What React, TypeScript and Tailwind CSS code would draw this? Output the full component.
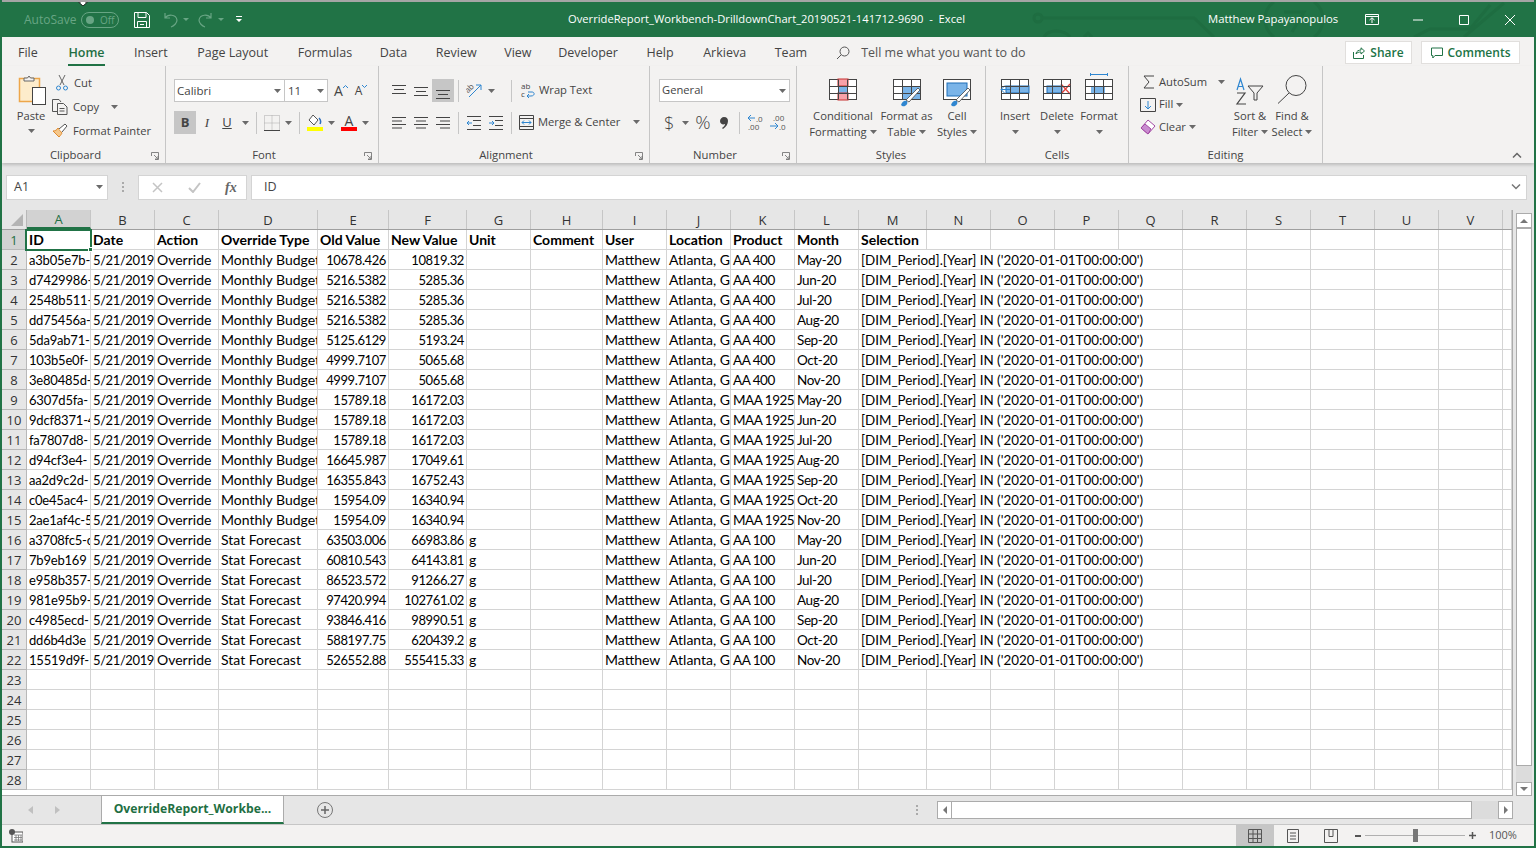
import React from "react";

const cols = [
  { l: "A", w: "w-[64px]" },
  { l: "B", w: "w-[64px]" },
  { l: "C", w: "w-[64px]" },
  { l: "D", w: "w-[99px]" },
  { l: "E", w: "w-[71px]" },
  { l: "F", w: "w-[78px]" },
  { l: "G", w: "w-[64px]" },
  { l: "H", w: "w-[72px]" },
  { l: "I", w: "w-[64px]" },
  { l: "J", w: "w-[64px]" },
  { l: "K", w: "w-[64px]" },
  { l: "L", w: "w-[64px]" },
  { l: "M", w: "w-[68px]" },
  { l: "N", w: "w-[64px]" },
  { l: "O", w: "w-[64px]" },
  { l: "P", w: "w-[64px]" },
  { l: "Q", w: "w-[64px]" },
  { l: "R", w: "w-[64px]" },
  { l: "S", w: "w-[64px]" },
  { l: "T", w: "w-[64px]" },
  { l: "U", w: "w-[64px]" },
  { l: "V", w: "w-[64px]" },
  { l: "", w: "w-[9px]" },
];

// text metrics per column, Lato letters run narrow and its digits run wide next to Calibri
const colText: Record<number, string> = {
  0: "text-[13px] tracking-[-0.2px] pt-[2px]",
  1: "text-[13px] tracking-[-0.4px] pt-[2px]",
  4: "text-[13px] tracking-[-0.4px] pt-[2px]",
  5: "text-[13px] tracking-[-0.4px] pt-[2px]",
  10: "text-[13.5px] tracking-[-0.5px] pt-[1px]",
  11: "text-[13.5px] tracking-[-0.4px] pt-[1px]",
  12: "text-[13.4px] pt-[1px]",
};

const SEL = "[DIM_Period].[Year] IN ('2020-01-01T00:00:00')";
const header = ["ID", "Date", "Action", "Override Type", "Old Value", "New Value", "Unit", "Comment", "User", "Location", "Product", "Month", "Selection"];

const data: string[][] = [
  ["a3b05e7b-", "Monthly Budget", "10678.426", "10819.32", "", "AA 400", "May-20"],
  ["d7429986-", "Monthly Budget", "5216.5382", "5285.36", "", "AA 400", "Jun-20"],
  ["2548b511-", "Monthly Budget", "5216.5382", "5285.36", "", "AA 400", "Jul-20"],
  ["dd75456a-", "Monthly Budget", "5216.5382", "5285.36", "", "AA 400", "Aug-20"],
  ["5da9ab71-", "Monthly Budget", "5125.6129", "5193.24", "", "AA 400", "Sep-20"],
  ["103b5e0f-", "Monthly Budget", "4999.7107", "5065.68", "", "AA 400", "Oct-20"],
  ["3e80485d-", "Monthly Budget", "4999.7107", "5065.68", "", "AA 400", "Nov-20"],
  ["6307d5fa-", "Monthly Budget", "15789.18", "16172.03", "", "MAA 1925", "May-20"],
  ["9dcf8371-4", "Monthly Budget", "15789.18", "16172.03", "", "MAA 1925", "Jun-20"],
  ["fa7807d8-", "Monthly Budget", "15789.18", "16172.03", "", "MAA 1925", "Jul-20"],
  ["d94cf3e4-", "Monthly Budget", "16645.987", "17049.61", "", "MAA 1925", "Aug-20"],
  ["aa2d9c2d-", "Monthly Budget", "16355.843", "16752.43", "", "MAA 1925", "Sep-20"],
  ["c0e45ac4-", "Monthly Budget", "15954.09", "16340.94", "", "MAA 1925", "Oct-20"],
  ["2ae1af4c-5", "Monthly Budget", "15954.09", "16340.94", "", "MAA 1925", "Nov-20"],
  ["a3708fc5-c", "Stat Forecast", "63503.006", "66983.86", "g", "AA 100", "May-20"],
  ["7b9eb169", "Stat Forecast", "60810.543", "64143.81", "g", "AA 100", "Jun-20"],
  ["e958b357-", "Stat Forecast", "86523.572", "91266.27", "g", "AA 100", "Jul-20"],
  ["981e95b9-", "Stat Forecast", "97420.994", "102761.02", "g", "AA 100", "Aug-20"],
  ["c4985ecd-", "Stat Forecast", "93846.416", "98990.51", "g", "AA 100", "Sep-20"],
  ["dd6b4d3e", "Stat Forecast", "588197.75", "620439.2", "g", "AA 100", "Oct-20"],
  ["15519d9f-", "Stat Forecast", "526552.88", "555415.33", "g", "AA 100", "Nov-20"],
];

const ui = "font-['Open_Sans','Noto_Sans',sans-serif]";
const cellFont = "font-['Lato','Carlito',sans-serif]";

function Chev({ className = "" }: { className?: string }) {
  return (
    <svg width="7" height="4" viewBox="0 0 7 4" className={"shrink-0 " + className}>
      <path d="M0 0h7L3.5 4z" fill="#6a6a6a" />
    </svg>
  );
}

function Sep({ className = "" }: { className?: string }) {
  return <div className={"w-px h-[22px] bg-[#c6c6c6] shrink-0 " + className} />;
}

function Lines({ kind, offset = 0 }: { kind: "l" | "c" | "r" | "t" | "m" | "b"; offset?: number }) {
  const y = kind === "t" ? [3, 7, 11] : kind === "m" ? [5, 9, 13] : kind === "b" ? [8, 12, 16] : [3, 6.5, 10, 13.5];
  const spans: [number, number][] =
    kind === "l" ? [[0, 14], [0, 10], [0, 14], [0, 10]]
    : kind === "r" ? [[0, 14], [4, 14], [0, 14], [4, 14]]
    : kind === "c" ? [[0, 14], [2, 12], [0, 14], [2, 12]]
    : [[0, 14], [2, 12], [0, 14]];
  return (
    <svg width="14" height="18" viewBox="0 0 14 18" style={{ marginLeft: offset }} className="shrink-0">
      {y.map((v, i) => (
        <path key={i} d={`M${spans[i][0]} ${v + 0.5}H${spans[i][1]}`} stroke="#444" strokeWidth="1" />
      ))}
    </svg>
  );
}

function PasteIcon() {
  return (
    <svg width="30" height="32" viewBox="0 0 30 32">
      <rect x="3.500" y="4.500" width="20" height="23" fill="#fdeccb" stroke="#eda64a" strokeWidth="1.500" />
      <path d="M8 7V4h3.500l1.500-2 1.500 2H18v3z" fill="#f3f2f1" stroke="#666" />
      <rect x="16.500" y="13.500" width="13" height="17" fill="#fff" stroke="#444" />
    </svg>
  );
}

function GridTable({ children }: { children?: React.ReactNode }) {
  return (
    <svg width="30" height="24" viewBox="0 0 30 24" className="shrink-0">
      <rect x="1.500" y="1.500" width="27" height="20" fill="#fff" stroke="#444" />
      {children}
      <path d="M1.500 8.500h27M1.500 15.500h27M10.500 1.500v20M19.500 1.500v20" stroke="#444" fill="none" />
    </svg>
  );
}

function Brush() {
  return (
    <g>
      <path d="M9 27c1-3 3-5 6-4 1 2 0 4-2 5-1 .5-3 .5-4-1z" fill="#2e86d0" />
      <path d="M14 22l12-12 2 2-11 12z" fill="#fff" stroke="#444" strokeWidth=".8" />
    </g>
  );
}

function BigBtn({ icon, l1, l2, w, chev = true }: { icon: React.ReactNode; l1: string; l2?: string; w: string; chev?: boolean }) {
  return (
    <div className={"flex flex-col items-center shrink-0 " + w}>
      <div className="h-[42px] flex justify-center items-start pt-[12px]">{icon}</div>
      <div className="text-[11.2px] leading-[16px] whitespace-nowrap text-[#444]">{l1}</div>
      <div className="h-[16px] text-[11.2px] leading-[16px] whitespace-nowrap text-[#444] flex items-center gap-[3px]">
        {l2}
        {chev && <Chev />}
      </div>
    </div>
  );
}

function Launcher() {
  return (
    <svg width="8" height="8" viewBox="0 0 8 8" className="shrink-0">
      <path d="M.5 4V.5H7.500V7.500H4M3 3l3.500 3.500M4 7H7V4" stroke="#777" fill="none" strokeWidth=".9" />
    </svg>
  );
}

function Group({ w, label, launcher, children }: { w: string; label: string; launcher?: boolean; children: React.ReactNode }) {
  return (
    <div className={"relative shrink-0 h-[97px] border-r border-[#c6c6c6] " + w}>
      <div className="h-[81px]">{children}</div>
      <div className={"h-[15px] flex items-center justify-center text-[11.3px] text-[#444] leading-none " + (launcher ? "pr-[16px]" : "")}>{label}</div>
      {launcher && (
        <div className="absolute right-[6px] bottom-[3px] flex">
          <Launcher />
        </div>
      )}
    </div>
  );
}

function TitleBar() {
  return (
    <div className="relative h-[37px] shrink-0 bg-[#217346] border-t-2 border-[#a5a5a5] flex items-center text-white overflow-hidden">
      <svg width="520" height="35" viewBox="0 0 520 35" className="absolute right-0 top-0" fill="none" stroke="#1e6d41" strokeWidth="3">
        <circle cx="24" cy="16" r="4" />
        <path d="M28 16H180l20 19M30 35c4-8 20-8 26 0M70 35l4-4 4 4" />
        <path d="M260 0c-12 8-12 26 0 35M300 0c12 8 12 26 0 35M270 10h20l-12 20" />
        <path d="M400 35l16-8h40l20-24M450 35l40-34" />
      </svg>
      <div className="relative flex items-center pl-[22px] text-[12px] w-[558px] shrink-0">
        <span className="text-[#68a584] text-[12px] w-[57px]">AutoSave</span>
        <div className="w-[38px] h-[16px] rounded-full border border-[#68a584] flex items-center pl-[4px] gap-[6px]">
          <div className="w-[8px] h-[8px] rounded-full bg-[#68a584]" />
          <span className="text-[10px] text-[#68a584] leading-none">Off</span>
        </div>
        <svg width="16" height="16" viewBox="0 0 16 16" className="ml-[15px]" fill="none" stroke="#fff">
          <path d="M.5.5h12l3 3v12H.5zM4 .5v5h8v-5M3.500 15.500v-6h9v6M6 12.500h4" />
        </svg>
        <svg width="26" height="16" viewBox="0 0 26 16" className="ml-[13px]" fill="none" stroke="#68a584" strokeWidth="1.200">
          <path d="M2 1v5h5M2 6c3-4 11-4 12 2 0 3-3 6-6 7" />
          <path d="M20 6h6l-3 3z" fill="#68a584" stroke="none" />
        </svg>
        <svg width="26" height="16" viewBox="0 0 26 16" className="ml-[9px]" fill="none" stroke="#68a584" strokeWidth="1.200">
          <path d="M13 1v5H8M13 6C10 2 2 2 1 8c0 3 3 6 6 7" />
          <path d="M20 6h6l-3 3z" fill="#68a584" stroke="none" />
        </svg>
        <svg width="6" height="8" viewBox="0 0 6 8" className="ml-[12px]">
          <path d="M0 0h6v1H0zM0 3h6L3 6z" fill="#fff" />
        </svg>
      </div>
      <div className="relative text-[11.2px] whitespace-nowrap w-[648px] shrink-0 pl-[8px]">
        OverrideReport_Workbench-DrilldownChart_20190521-141712-9690&nbsp;&nbsp;-&nbsp;&nbsp;Excel
      </div>
      <div className="relative text-[11.3px] whitespace-nowrap w-[150px] shrink-0">Matthew Papayanopulos</div>
      <svg width="14" height="11" viewBox="0 0 14 11" className="relative ml-[7px]" fill="none" stroke="#fff">
        <path d="M.5.5h13v10H.5zM.5 2.500h13M7 9V4M4.500 6L7 3.800 9.500 6" />
      </svg>
      <svg width="10" height="2" viewBox="0 0 10 2" className="relative ml-[34px]">
        <path d="M0 1h10" stroke="#fff" />
      </svg>
      <svg width="10" height="10" viewBox="0 0 10 10" className="relative ml-[36px]" fill="none" stroke="#fff">
        <path d="M.5.5h9v9h-9z" />
      </svg>
      <svg width="10" height="10" viewBox="0 0 10 10" className="relative ml-[36px]" fill="none" stroke="#fff">
        <path d="M0 0l10 10M10 0L0 10" />
      </svg>
      {/* mouse pointer caught at the top of the window */}
      <svg width="10" height="6" viewBox="0 0 10 6" className="absolute left-[76px] -top-[2px]">
        <path d="M3 0h4v2h2.500L5 6 .5 2H3z" fill="#fff" stroke="#000" strokeWidth=".8" />
      </svg>
    </div>
  );
}

function Tabs() {
  const tabs = [
    { t: "File", c: "" },
    { t: "Home", c: "ml-[2px] w-[37px] text-[#1f6f43] font-semibold" },
    { t: "Insert", c: "" },
    { t: "Page Layout", c: "ml-[1px]" },
    { t: "Formulas", c: "ml-[1px]" },
    { t: "Data", c: "-ml-[1px]" },
    { t: "Review", c: "" },
    { t: "View", c: "-ml-[1px]" },
    { t: "Developer", c: "-ml-[2px]" },
    { t: "Help", c: "" },
    { t: "Arkieva", c: "ml-[1px]" },
    { t: "Team", c: "" },
  ];
  return (
    <div className="h-[29px] shrink-0 bg-[#f3f2f1] flex items-center pl-[16px] text-[12.5px] text-[#444] relative">
      <div className="flex gap-[28.6px] items-center mt-[3px]">
        {tabs.map(({ t, c }) => (
          <div key={t} className={"relative whitespace-nowrap " + c}>
            {t}
            {t === "Home" && <div className="absolute left-0 right-0 -bottom-[4px] h-[2px] bg-[#217346]" />}
          </div>
        ))}
      </div>
      <svg width="14" height="14" viewBox="0 0 14 14" className="ml-[29px] mt-[3px]" fill="none" stroke="#555">
        <circle cx="8.500" cy="5.500" r="4.500" />
        <path d="M5.200 8.800L1 13" />
      </svg>
      <span className="ml-[11px] mt-[3px] text-[#555] whitespace-nowrap">Tell me what you want to do</span>
      <div className="ml-auto flex items-center gap-[9px] pr-[14px] mt-[1px]">
        <div className="h-[23px] w-[67px] pt-[1px] bg-white border border-[#e1dfdd] flex items-center justify-center gap-[5px] text-[#217346] font-semibold text-[12px]">
          <svg width="12" height="12" viewBox="0 0 12 12" fill="none" stroke="#217346">
            <path d="M.5 5v6.500h10V8M3 7c0-3 3-4 5-4V.800L11.500 4 8 7V5C6 5 4 5.500 3 7z" />
          </svg>
          Share
        </div>
        <div className="h-[23px] w-[99px] pt-[1px] bg-white border border-[#e1dfdd] flex items-center justify-center gap-[5px] text-[#217346] font-semibold text-[12px]">
          <svg width="12" height="12" viewBox="0 0 12 12" fill="none" stroke="#217346">
            <path d="M.5 1h11v7.500H4L1.800 11V8.500H.5z" />
          </svg>
          Comments
        </div>
      </div>
    </div>
  );
}

function Ribbon() {
  return (
    <div className={"h-[97px] shrink-0 bg-[#f3f2f1] flex text-[#444] shadow-[0_2px_3px_rgba(0,0,0,0.18)] relative z-10 " + ui}>
      <Group w="w-[164px]" label="Clipboard" launcher>
        <div className="flex pl-[14px] pt-[8px]">
          <div className="flex flex-col items-center w-[30px] shrink-0">
            <PasteIcon />
            <div className="text-[11.2px] mt-[2px] leading-[16px]">Paste</div>
            <Chev className="mt-[5px]" />
          </div>
          <div className="flex flex-col ml-[9px] -mt-[3px] text-[11.2px] leading-[24px]">
            <div className="flex items-center gap-[5px] h-[24px]">
              <svg width="14" height="16" viewBox="0 0 14 16" fill="none">
                <path d="M4 0l5 10M10 0L5 10" stroke="#666" />
                <circle cx="3.500" cy="13" r="2" stroke="#2e86d0" />
                <circle cx="10.500" cy="13" r="2" stroke="#2e86d0" />
              </svg>
              Cut
            </div>
            <div className="flex items-center gap-[5px] h-[24px] -ml-[3px]">
              <svg width="16" height="16" viewBox="0 0 16 16" fill="none" stroke="#555">
                <path d="M5 12.500H.5V.5H7L9 3M5.500 4.500h6l3.500 3.500v7.500H5.500zM7.500 9.500h5M7.500 12h5" />
              </svg>
              Copy
              <Chev className="ml-[7px]" />
            </div>
            <div className="flex items-center gap-[5px] h-[24px] -ml-[3px] whitespace-nowrap">
              <svg width="16" height="16" viewBox="0 0 16 16" fill="none">
                <path d="M1 8l6 6c2-2 3-4 3-4L6 5C5 7 3 8 1 8z" fill="#f5c78a" stroke="#e08a2e" />
                <path d="M7 6l6-5 2 2-5 6" fill="#fff" stroke="#555" />
              </svg>
              Format Painter
            </div>
          </div>
        </div>
      </Group>

      <Group w="w-[213px]" label="Font" launcher>
        <div className="pl-[8px] pt-[13px]">
          <div className="flex items-center h-[23px]">
            <div className="w-[111px] h-[23px] bg-white border border-[#c6c6c6] flex items-center justify-between pl-[2px] pr-[3px] text-[11.5px]">
              Calibri <Chev />
            </div>
            <div className="w-[43px] h-[23px] bg-white border border-[#c6c6c6] border-l-0 flex items-center justify-between pl-[3px] pr-[3px] text-[11.5px]">
              11 <Chev />
            </div>
            <span className="ml-[6px] text-[14px]">A</span>
            <svg width="5" height="3" viewBox="0 0 5 3" className="mb-[8px]" fill="none" stroke="#2e86d0"><path d="M0 3l2.500-2.500L5 3" /></svg>
            <span className="ml-[7px] text-[12px]">A</span>
            <svg width="5" height="3" viewBox="0 0 5 3" className="mb-[8px]" fill="none" stroke="#2e86d0"><path d="M0 0l2.500 2.500L5 0" /></svg>
          </div>
          <div className="flex items-center h-[23px] mt-[9px] text-[13px]">
            <div className="w-[22px] h-[23px] bg-[#c6c6c6] flex items-center justify-center font-bold">B</div>
            <div className="w-[22px] text-center italic font-['Liberation_Serif',serif]">I</div>
            <div className="w-[18px] text-center underline">U</div>
            <Chev className="ml-[6px]" />
            <Sep className="ml-[7px]" />
            <svg width="16" height="16" viewBox="0 0 16 16" className="ml-[7px]" fill="none" stroke="#aaa" strokeDasharray="1 1">
              <path d="M.5.5h15v15H.5zM8 .5v15M.5 8h15" />
              <path d="M0 15.500h16" stroke="#444" strokeDasharray="none" />
            </svg>
            <Chev className="ml-[5px]" />
            <Sep className="ml-[7px]" />
            <div className="ml-[7px] w-[16px] flex flex-col items-center">
              <svg width="14" height="13" viewBox="0 0 14 13" fill="none">
                <path d="M5 1l5 5-4 5-5-5z" stroke="#555" fill="#fff" />
                <path d="M11 4c2 2 2 4 1 6" stroke="#2e6fbd" strokeWidth="1.500" />
              </svg>
              <div className="w-[16px] h-[4px] bg-[#ffff00]" />
            </div>
            <Chev className="ml-[5px]" />
            <div className="ml-[6px] w-[16px] flex flex-col items-center leading-none">
              <span className="text-[14px] leading-[13px]">A</span>
              <div className="w-[16px] h-[4px] bg-[#ff0000]" />
            </div>
            <Chev className="ml-[5px]" />
          </div>
        </div>
      </Group>

      <Group w="w-[271px]" label="Alignment" launcher>
        <div className="pl-[13px] pt-[13px]">
          <div className="flex items-center h-[23px]">
            <Lines kind="t" />
            <Lines kind="m" offset={8} />
            <div className="ml-[4px] w-[22px] h-[23px] bg-[#c6c6c6] flex items-center justify-center">
              <Lines kind="b" />
            </div>
            <Sep className="ml-[4px]" />
            <svg width="17" height="17" viewBox="0 0 17 17" className="ml-[7px]" fill="none">
              <path d="M3 15L15 3M15 3h-5M15 3v5" stroke="#2e86d0" />
              <text x="0" y="9" fontSize="8" fill="#555" fontFamily="Open Sans" transform="rotate(-45 4 8)">ab</text>
            </svg>
            <Chev className="ml-[5px]" />
            <Sep className="ml-[16px]" />
            <div className="ml-[9px] flex items-center gap-[3px] text-[11.2px] whitespace-nowrap">
              <svg width="15" height="16" viewBox="0 0 15 16" fill="none">
                <path d="M7 10h4c3 0 3 4-1 4H6M8 12l-2 2 2 2" stroke="#2e86d0" />
                <text x="0" y="7" fontSize="8" fill="#444" fontFamily="Open Sans">ab</text>
                <text x="0" y="15" fontSize="8" fill="#444" fontFamily="Open Sans">c</text>
              </svg>
              Wrap Text
            </div>
          </div>
          <div className="flex items-center h-[23px] mt-[9px]">
            <Lines kind="l" />
            <Lines kind="c" offset={8} />
            <Lines kind="r" offset={8} />
            <Sep className="ml-[8px]" />
            <svg width="14" height="14" viewBox="0 0 14 14" className="ml-[8px]" fill="none" stroke="#444">
              <path d="M0 .5h14M6 4.500h8M6 9.500h8M0 13.500h14" />
              <path d="M0 7h5M0 7l2-2M0 7l2 2" stroke="#2e86d0" />
            </svg>
            <svg width="14" height="14" viewBox="0 0 14 14" className="ml-[8px]" fill="none" stroke="#444">
              <path d="M0 .5h14M6 4.500h8M6 9.500h8M0 13.500h14" />
              <path d="M0 7h5M5 7L3 5M5 7L3 9" stroke="#2e86d0" />
            </svg>
            <Sep className="ml-[8px]" />
            <div className="ml-[7px] flex items-center gap-[4px] text-[11.2px] whitespace-nowrap">
              <svg width="15" height="15" viewBox="0 0 15 15" fill="none" stroke="#444">
                <path d="M.5.5h14v14H.5zM.5 3.500h14M.5 11.500h14" />
                <path d="M3 7.500h9M3 7.500l2-2M3 7.500l2 2M12 7.500l-2-2M12 7.500l-2 2" stroke="#2e86d0" />
              </svg>
              Merge &amp; Center
              <Chev className="ml-[9px]" />
            </div>
          </div>
        </div>
      </Group>

      <Group w="w-[147px]" label="Number" launcher>
        <div className="pl-[9px] pt-[13px]">
          <div className="w-[131px] h-[23px] bg-white border border-[#c6c6c6] flex items-center justify-between pl-[2px] pr-[3px] text-[11.2px]">
            General <Chev />
          </div>
          <div className="flex items-center h-[23px] mt-[9px]">
            <span className="ml-[5px] text-[18px] leading-none font-light">$</span>
            <Chev className="ml-[8px]" />
            <span className="ml-[6px] text-[19px] leading-none font-light">%</span>
            <svg width="8" height="12" viewBox="0 0 8 12" className="ml-[9px] shrink-0">
              <path d="M4 0c3 0 4 2 4 4 0 3-2 6-5 8l-1-1c2-1 3-3 3-4-2 1-5 0-5-3 0-2 2-4 4-4z" fill="#444" />
            </svg>
            <Sep className="ml-[11px]" />
            <svg width="17" height="17" viewBox="0 0 17 17" className="ml-[7px]" fill="none">
              <path d="M8 4H1M1 4l3-3M1 4l3 3" stroke="#2e86d0" />
              <text x="9" y="8" fontSize="8" fill="#555" fontFamily="Open Sans">.0</text>
              <text x="1" y="16" fontSize="8" fill="#555" fontFamily="Open Sans">.00</text>
            </svg>
            <svg width="17" height="17" viewBox="0 0 17 17" className="ml-[5px]" fill="none">
              <path d="M1 12h8M9 12l-3-3M9 12l-3 3" stroke="#2e86d0" />
              <text x="4" y="7" fontSize="8" fill="#555" fontFamily="Open Sans">.00</text>
              <text x="10" y="16" fontSize="8" fill="#555" fontFamily="Open Sans">.0</text>
            </svg>
          </div>
        </div>
      </Group>

      <Group w="w-[189px]" label="Styles">
        <div className="flex pl-[14px]">
          <BigBtn
            w="w-[64px]"
            l1="Conditional"
            l2="Formatting"
            icon={
              <GridTable>
                <rect x="10" y="1" width="10" height="7" fill="#f7a1a8" stroke="#c83030" />
                <rect x="10" y="8" width="10" height="7" fill="#7ab4e8" />
                <rect x="10" y="15" width="10" height="7" fill="#f7a1a8" stroke="#c83030" />
              </GridTable>
            }
          />
          <div className="w-[5px] shrink-0" />
          <BigBtn
            w="w-[53px]"
            l1="Format as"
            l2="Table"
            icon={
              <svg width="30" height="30" viewBox="0 0 30 30" fill="none">
                <rect x="1.500" y="1.500" width="27" height="20" fill="#fff" stroke="#444" />
                <rect x="10" y="8" width="18" height="13" fill="#7ab4e8" />
                <path d="M1.500 8.500h27M1.500 15.500h27M10.500 1.500v20M19.500 1.500v20" stroke="#444" />
                <Brush />
              </svg>
            }
          />
          <div className="w-[4px] shrink-0" />
          <BigBtn
            w="w-[40px]"
            l1="Cell"
            l2="Styles"
            icon={
              <svg width="30" height="30" viewBox="0 0 30 30" fill="none">
                <rect x="1.500" y="1.500" width="27" height="20" fill="#fff" stroke="#444" />
                <rect x="5" y="5" width="20" height="13" fill="#7ab4e8" stroke="#1f6fb8" />
                <Brush />
              </svg>
            }
          />
        </div>
      </Group>

      <Group w="w-[143px]" label="Cells">
        <div className="flex pl-[14px] gap-[12px]">
          <BigBtn
            w="w-[30px]"
            l1="Insert"
            icon={
              <GridTable>
                <rect x="6" y="8" width="23" height="7" fill="#7ab4e8" stroke="#1f6fb8" />
                <path d="M10 11.500H1M1 11.500l4-4M1 11.500l4 4" stroke="#2e86d0" />
              </GridTable>
            }
          />
          <BigBtn
            w="w-[30px]"
            l1="Delete"
            icon={
              <GridTable>
                <rect x="5" y="8" width="15" height="7" fill="#7ab4e8" stroke="#1f6fb8" />
                <path d="M19 6l9 10M28 6l-9 10" stroke="#e0443e" strokeWidth="1.300" />
              </GridTable>
            }
          />
          <BigBtn
            w="w-[30px]"
            l1="Format"
            icon={
              <div className="flex flex-col items-center -mt-[5px]">
                <svg width="18" height="5" viewBox="0 0 18 5" fill="none" stroke="#2e86d0">
                  <path d="M.5 0v3M.5 1.500h17M17.500 0v3" />
                </svg>
                <GridTable>
                  <rect x="7" y="8" width="14" height="7" fill="#7ab4e8" />
                </GridTable>
              </div>
            }
          />
        </div>
      </Group>

      <Group w="w-[194px]" label="Editing">
        <div className="flex pl-[11px]">
          <div className="flex flex-col text-[11.2px] w-[95px] shrink-0 pt-[5px]">
            <div className="h-[22px] flex items-center">
              <svg width="14" height="14" viewBox="0 0 14 14" className="ml-[2px]" fill="none" stroke="#444"><path d="M12 1H2l5 6-5 6h10" /></svg>
              <span className="ml-[3px]">AutoSum</span>
              <Chev className="ml-[11px]" />
            </div>
            <div className="h-[23px] flex items-center">
              <svg width="16" height="14" viewBox="0 0 16 14" fill="none" stroke="#444">
                <path d="M.5.5h15v13H.5z" />
                <path d="M8 3v8M5 8l3 3 3-3" stroke="#2e86d0" />
              </svg>
              <span className="ml-[3px]">Fill</span>
              <Chev className="ml-[3px]" />
            </div>
            <div className="h-[22px] flex items-center">
              <svg width="16" height="16" viewBox="0 0 16 16" fill="none">
                <path d="M1 9l7-8 7 6-7 8z" fill="#fff" stroke="#a349a4" />
                <path d="M1 9l4-4 6 5-3 5z" fill="#c98cd0" stroke="#a349a4" />
              </svg>
              <span className="ml-[3px]">Clear</span>
              <Chev className="ml-[3px]" />
            </div>
          </div>
          <BigBtn
            w="w-[30px]"
            l1="Sort &amp;"
            l2="Filter"
            icon={
              <svg width="30" height="30" viewBox="0 0 30 30" fill="none" className="-mt-[2px]">
                <path d="M2 14L5.500 3 9 14M3 10.500h5" stroke="#2e86d0" strokeWidth="1.200" />
                <path d="M2 17h8l-8 11h9" stroke="#444" strokeWidth="1.200" />
                <path d="M13 10h15l-6 7v7h-3v-7z" stroke="#444" />
              </svg>
            }
          />
          <div className="w-[8px] shrink-0" />
          <BigBtn
            w="w-[38px]"
            l1="Find &amp;"
            l2="Select"
            icon={
              <svg width="31" height="30" viewBox="0 0 31 30" fill="none" stroke="#444" className="-mt-[3px]">
                <circle cx="19" cy="10.500" r="10" />
                <path d="M12 18L1 28.500" />
              </svg>
            }
          />
        </div>
      </Group>

      <div className="flex-1 relative">
        <svg width="10" height="6" viewBox="0 0 10 6" className="absolute right-[12px] bottom-[5px]" fill="none" stroke="#666" strokeWidth="1.500">
          <path d="M1 5.500L5 1.500l4 4" />
        </svg>
      </div>
    </div>
  );
}

function FormulaBar() {
  return (
    <div className={"h-[47px] shrink-0 bg-[#e6e6e6] flex items-center pl-[4px] pr-[7px] pt-[1px] text-[12.5px] text-[#444] " + ui}>
      <div className="w-[102px] h-[25px] bg-white border border-[#d4d4d4] flex items-center justify-between pl-[7px] pr-[4px]">
        A1
        <Chev />
      </div>
      <div className="w-[30px] flex flex-col items-center gap-[2px]">
        <div className="w-[2px] h-[2px] bg-[#aaa]" />
        <div className="w-[2px] h-[2px] bg-[#aaa]" />
        <div className="w-[2px] h-[2px] bg-[#aaa]" />
      </div>
      <div className="w-[109px] h-[25px] bg-white border border-[#d4d4d4] flex items-center pl-[13px] shrink-0">
        <svg width="11" height="11" viewBox="0 0 11 11" fill="none" stroke="#c4c4c4" strokeWidth="1.500"><path d="M1 1l9 9M10 1l-9 9" /></svg>
        <svg width="13" height="11" viewBox="0 0 13 11" className="ml-[25px]" fill="none" stroke="#c4c4c4" strokeWidth="2"><path d="M1 6l4 4 7-9" /></svg>
        <span className="ml-[24px] italic font-['Liberation_Serif',serif] text-[14px] font-bold text-[#666]">fx</span>
      </div>
      <div className="flex-1 ml-[4px] h-[25px] bg-white border border-[#d4d4d4] flex items-center justify-between pl-[12px] pr-[5px]">
        ID
        <svg width="10" height="6" viewBox="0 0 10 6" fill="none" stroke="#777" strokeWidth="1.500"><path d="M1 .5l4 4 4-4" /></svg>
      </div>
    </div>
  );
}

function rowCells(n: number) {
  if (n === 1) return [...header];
  const d = data[n - 2];
  if (!d) return [];
  return [d[0], "5/21/2019", "Override", d[1], d[2], d[3], d[4], "", "Matthew", "Atlanta, GA", d[5], d[6], SEL];
}

function Sheet() {
  const rows = Array.from({ length: 28 }, (_, i) => i + 1);
  return (
    <div className={"relative w-[1510px] shrink-0 min-h-0 flex flex-col bg-white overflow-hidden border-b border-[#ababab] " + cellFont}>
      <div className={"h-[20px] shrink-0 flex bg-[#e6e6e6] border-b border-[#9f9f9f] text-[13px] text-[#333] " + ui}>
        <div className="w-[25px] shrink-0 border-r border-[#b8b8b8] flex items-end justify-end pr-[3px] pb-[3px]">
          <svg width="12" height="12" viewBox="0 0 12 12"><path d="M12 0v12H0z" fill="#b4b4b4" /></svg>
        </div>
        {cols.map((c, i) => (
          <div
            key={i}
            className={
              "shrink-0 flex items-center justify-center pt-[2px] border-r border-[#c6c6c6] " + c.w + " " +
              (c.l === "A" ? "bg-[#d2d2d2] text-[#1f6f43] border-b-2 border-b-[#217346]" : "")
            }
          >
            {c.l}
          </div>
        ))}
      </div>
      {rows.map((n) => {
        const cells = rowCells(n);
        return (
          <div key={n} className="h-[20px] shrink-0 flex">
            <div
              className={
                "w-[25px] shrink-0 flex items-center justify-center pt-[2px] text-[13px] border-r border-b border-[#b8b8b8] " + ui + " " +
                (n === 1 ? "bg-[#d2d2d2] text-[#1f6f43]" : "bg-[#e6e6e6] text-[#333]")
              }
            >
              {n}
            </div>
            {cols.map((c, i) => {
              const v = cells[i] ?? "";
              const right = n > 1 && (i === 4 || i === 5);
              const spill = i === 12 && n > 1;
              const noBorder = n > 1 && n <= 22 && i > 12 && i <= 15;
              const text = n === 1 ? "text-[14px] font-bold" : colText[i] ?? "text-[14px]";
              return (
                <div
                  key={i}
                  className={
                    "shrink-0 h-[20px] flex items-center px-[2px] text-black whitespace-nowrap border-b border-[#d4d4d4] " + c.w + " " + text + " " +
                    (spill && n <= 22 ? "overflow-visible relative z-[1] " : "overflow-hidden ") +
                    (spill && n <= 22 || noBorder ? "" : "border-r ") +
                    (right ? "justify-end" : "")
                  }
                >
                  {v}
                </div>
              );
            })}
          </div>
        );
      })}
      {/* selected cell */}
      <div className="absolute left-[23px] top-[19px] w-[67px] h-[22px] border-2 border-[#217346] z-[2]">
        <div className="absolute -right-[3px] -bottom-[3px] w-[5px] h-[5px] bg-[#217346] border border-white" />
      </div>
    </div>
  );
}

function VScroll() {
  return (
    <div className="flex-1 bg-[#e6e6e6] border-l border-[#ababab] flex flex-col items-center pt-[3px]">
      <div className="w-[16px] h-[15px] bg-white border border-[#ababab] flex items-center justify-center">
        <svg width="8" height="4" viewBox="0 0 8 4"><path d="M0 4l4-4 4 4z" fill="#777" /></svg>
      </div>
      <div className="w-[16px] h-[538px] bg-white border border-[#ababab]" />
      <div className="w-[16px] flex-1 bg-[#dcdcdc]" />
      <div className="w-[16px] h-[14px] bg-white border border-[#ababab] flex items-center justify-center">
        <svg width="8" height="4" viewBox="0 0 8 4"><path d="M0 0l4 4 4-4z" fill="#777" /></svg>
      </div>
    </div>
  );
}

function SheetTabs() {
  return (
    <div className={"h-[28px] shrink-0 bg-[#e6e6e6] flex items-stretch " + ui}>
      <div className="w-[99px] shrink-0 flex items-center pl-[26px] gap-[22px]">
        <svg width="5" height="8" viewBox="0 0 5 8"><path d="M5 0v8L0 4z" fill="#c0c0c0" /></svg>
        <svg width="5" height="8" viewBox="0 0 5 8"><path d="M0 0v8l5-4z" fill="#c0c0c0" /></svg>
      </div>
      <div className="w-[183px] shrink-0 bg-white border-x border-[#ababab] border-b-2 border-b-[#217346] flex items-center justify-center text-[12.2px] font-bold text-[#1f6f43] whitespace-nowrap">
        OverrideReport_Workbe...
      </div>
      <div className="ml-[33px] self-center w-[16px] h-[16px] rounded-full border border-[#777] flex items-center justify-center">
        <svg width="8" height="8" viewBox="0 0 8 8"><path d="M4 0v8M0 4h8" stroke="#666" strokeWidth="1.500" /></svg>
      </div>
      <div className="ml-[583px] self-center flex flex-col gap-[2px] mr-[19px]">
        <div className="w-[2px] h-[2px] bg-[#aaa]" />
        <div className="w-[2px] h-[2px] bg-[#aaa]" />
        <div className="w-[2px] h-[2px] bg-[#aaa]" />
      </div>
      <div className="self-center h-[18px] flex">
        <div className="w-[15px] bg-white border border-[#ababab] flex items-center justify-center">
          <svg width="4" height="8" viewBox="0 0 4 8"><path d="M4 0v8L0 4z" fill="#777" /></svg>
        </div>
        <div className="w-[520px] bg-white border-y border-r border-[#ababab]" />
        <div className="w-[26px] bg-[#dcdcdc]" />
        <div className="w-[15px] bg-white border border-[#ababab] flex items-center justify-center">
          <svg width="4" height="8" viewBox="0 0 4 8"><path d="M0 0v8l4-4z" fill="#777" /></svg>
        </div>
      </div>
    </div>
  );
}

function StatusBar() {
  return (
    <div className={"h-[22px] shrink-0 bg-[#f3f2f1] border-t border-[#c6c6c6] flex items-center pl-[7px] text-[11.5px] text-[#555] " + ui}>
      <svg width="14" height="14" viewBox="0 0 14 14">
        <rect x="3" y="3" width="11" height="10" fill="#fff" stroke="#555" />
        <circle cx="3" cy="3" r="3" fill="#555" />
        <path d="M5 6h8M5 8.500h8M5 11h8M7 6v6M9.500 6v6M12 6v6" stroke="#777" strokeWidth=".8" />
      </svg>
      <div className="ml-[1213px] w-[38px] h-[21px] bg-[#c6c6c6] flex items-center justify-center">
        <svg width="14" height="14" viewBox="0 0 14 14" fill="none" stroke="#555">
          <path d="M.5.5h13v13H.5zM.5 5h13M.5 9.500h13M5 .5v13M9.500 .5v13" />
        </svg>
      </div>
      <svg width="14" height="14" viewBox="0 0 14 14" className="ml-[12px]" fill="none" stroke="#555">
        <path d="M1.500.5h11v13h-11zM4 4h6M4 7h6M4 10h6" />
      </svg>
      <svg width="14" height="14" viewBox="0 0 14 14" className="ml-[24px]" fill="none" stroke="#555">
        <path d="M.5.5h13v13H.5zM5 .5v7h4v-7" />
      </svg>
      <div className="ml-[17px] w-[6px] h-[2px] bg-[#555]" />
      <div className="relative ml-[4px] w-[100px] h-px bg-[#b0b0b0]">
        <div className="absolute left-[48px] -top-[6px] w-[5px] h-[13px] bg-[#777]" />
      </div>
      <svg width="7" height="7" viewBox="0 0 7 7" className="ml-[4px]"><path d="M3.500 0v7M0 3.500h7" stroke="#555" strokeWidth="1.500" /></svg>
      <span className="ml-[13px] text-[11px]">100%</span>
    </div>
  );
}

export default function App() {
  return (
    <div className="w-[1536px] h-[848px] flex flex-col overflow-hidden bg-[#e6e6e6] border-x-2 border-b-2 border-[#217346]">
      <div className={ui}>
        <TitleBar />
        <Tabs />
      </div>
      <Ribbon />
      <FormulaBar />
      <div className="flex-1 min-h-0 flex">
        <Sheet />
        <VScroll />
      </div>
      <SheetTabs />
      <StatusBar />
    </div>
  );
}
